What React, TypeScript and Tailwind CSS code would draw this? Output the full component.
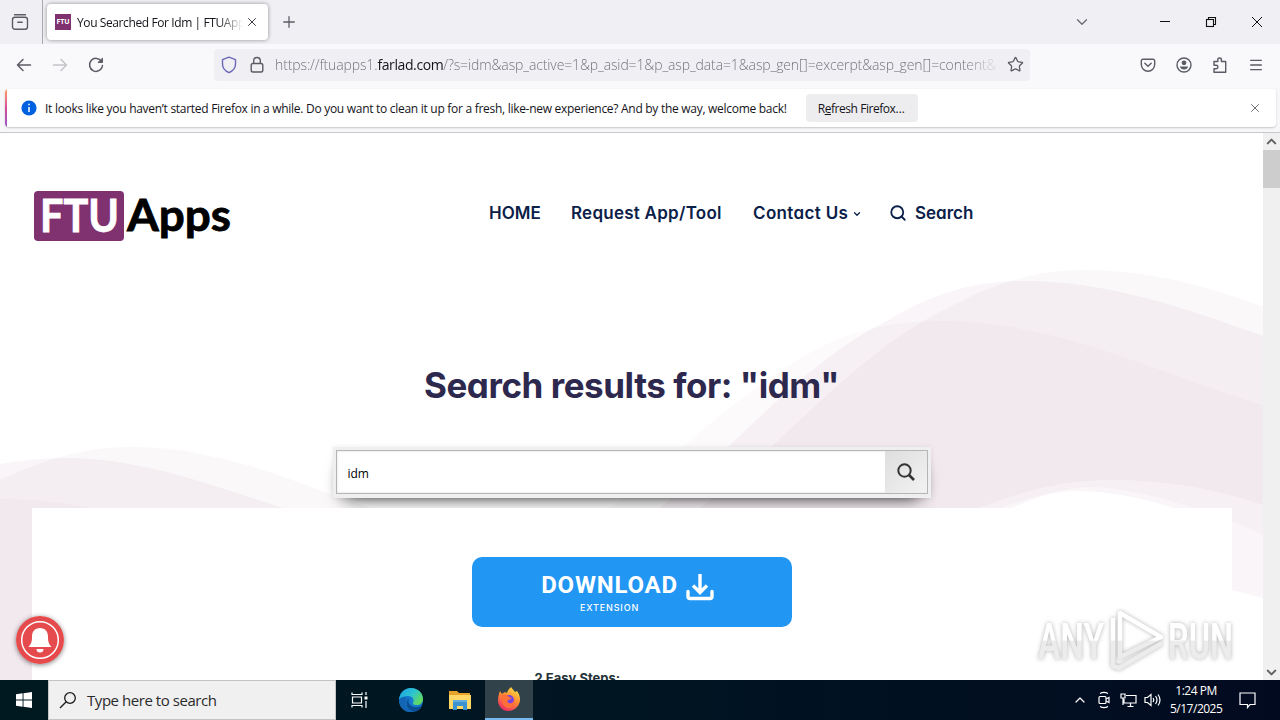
import React from 'react';
import { ChevronDown, ChevronUp, Menu, Plus, Search, Star, X } from 'lucide-react';

function TabBar() {
  return (
    <div className="flex h-11 shrink-0 items-center bg-[#f0f0f4]">
      <div className="flex h-11 w-[43px] items-center justify-center border-r border-[#a9a9b0] pr-[3px]">
        <svg width="18" height="18" viewBox="0 0 18 18" fill="none" stroke="#5b5b66" strokeWidth="1.4">
          <path d="M3.5 1.7h11" strokeLinecap="round" />
          <rect x="1.5" y="4.2" width="15" height="12" rx="2.5" />
          <path d="M6.8 9.2h4.4" strokeLinecap="round" />
        </svg>
      </div>
      <div className="ml-1 flex h-9 w-[221px] items-center rounded bg-white pl-2 shadow-[0_0_4px_rgba(0,0,0,0.4)]">
        <div className="flex size-4 items-center justify-center bg-[#80316f] text-[7px] font-bold text-white">FTU</div>
        <div className="ml-1.5 w-[166px] overflow-hidden whitespace-nowrap pt-0.5 text-[12px] tracking-[-0.4px] text-[#15141a] [mask-image:linear-gradient(to_right,black_85%,transparent)]">
          You Searched For Idm | FTUApps
        </div>
        <X className="ml-0.5 size-3.5 text-[#3a3a44]" strokeWidth={1.7} />
      </div>
      <Plus className="ml-3 size-[18px] text-[#5b5b66]" strokeWidth={1.7} />
      <div className="ml-auto flex items-center">
        <ChevronDown className="mr-[68px] size-[18px] text-[#6b6b76]" strokeWidth={1.8} />
        <svg width="12" height="12" viewBox="0 0 12 12" className="mr-[34px]">
          <path d="M1 5.5h10" stroke="#111" />
        </svg>
        <svg width="12" height="12" viewBox="0 0 12 12" className="mr-[34px]" fill="none" stroke="#111" strokeWidth="1.1">
          <rect x="1.5" y="3.5" width="7" height="7" />
          <path d="M3.5 3.5v-2h7v7h-2" />
        </svg>
        <svg width="12" height="12" viewBox="0 0 12 12" className="mr-[17px]">
          <path d="M1 1l10 10M11 1L1 11" stroke="#111" />
        </svg>
      </div>
    </div>
  );
}

function NavBar() {
  return (
    <div className="flex h-11 shrink-0 items-center bg-[#f9f9fb] pb-[3px] text-[#5b5b66]">
      <svg width="90" height="18" viewBox="0 0 90 18" fill="none" stroke="currentColor" strokeWidth="1.5" className="ml-[15px]" strokeLinecap="round" strokeLinejoin="round">
        <path d="M15.5 9H2.5M8 3.5L2.5 9l5.5 5.5" />
        <path d="M38.5 9h13M46 3.5l5.5 5.5l-5.5 5.5" stroke="#c3c3ca" />
        <path d="M86.6 5.5A6.5 6.5 0 1 0 87.5 9.5" />
        <path d="M87.5 2.5v4h-4.2z" fill="currentColor" strokeWidth="1" />
      </svg>
      <div className="ml-[109px] flex h-8 w-[816px] items-center rounded bg-[#f0f0f4] pl-[7px]">
        <svg width="16" height="18" viewBox="0 0 16 18" fill="none" stroke="#6c66b8" strokeWidth="1.4">
          <path d="M8 1.2L14.5 3.7V8c0 4-2.7 7-6.5 8.7C4.2 15 1.5 12 1.5 8V3.7z" strokeLinejoin="round" />
        </svg>
        <svg width="16" height="18" viewBox="0 0 16 18" fill="none" stroke="#5b5b66" strokeWidth="1.4" className="ml-3">
          <rect x="2.2" y="7.5" width="11.6" height="8.5" rx="1.8" />
          <path d="M4.7 7.5V4.8a3.3 3.3 0 0 1 6.6 0v2.700" />
        </svg>
        <div className="ml-[10px] w-[725px] overflow-hidden whitespace-nowrap text-[14px] font-light tracking-[-0.12px] text-[#74747e] [mask-image:linear-gradient(to_right,black_95%,transparent)]">
          https://ftuapps1.<span className="font-normal tracking-[-0.4px] text-[#15141a]">farlad.com</span>/?s=idm&amp;asp_active=1&amp;p_asid=1&amp;p_asp_data=1&amp;asp_gen[]=excerpt&amp;asp_gen[]=content&amp;
        </div>
        <Star className="ml-[7px] size-[17px] shrink-0 text-[#5b5b66]" strokeWidth={1.8} />
      </div>
      <div className="ml-auto flex items-center pr-4">
        <svg width="16" height="16" viewBox="0 0 16 16" fill="none" stroke="currentColor" strokeWidth="1.4" className="mr-5">
          <path d="M3 2.2h10a1.7 1.7 0 0 1 1.7 1.7V7.5a6.7 6.7 0 0 1-13.4 0V3.9A1.7 1.7 0 0 1 3 2.2z" />
          <path d="M4.8 6.2L8 9.2l3.2-3" strokeLinecap="round" />
        </svg>
        <svg width="16" height="16" viewBox="0 0 16 16" fill="none" stroke="currentColor" strokeWidth="1.4" className="mr-5">
          <circle cx="8" cy="8" r="7" />
          <circle cx="8" cy="5.8" r="2.4" fill="currentColor" stroke="none" />
          <path d="M4 9.6h8c0 2-2 3-4 3s-4-1-4-3z" fill="currentColor" stroke="none" />
        </svg>
        <svg width="16" height="16" viewBox="0 0 16 16" fill="none" stroke="currentColor" strokeWidth="1.4" className="mr-5">
          <path d="M2 4.5h3.8V2.8a1.8 1.8 0 0 1 3.6 0v1.7h4.3v10.7H2v-3.4h2.2a1.7 1.7 0 0 0 0-3.5H2z" strokeLinejoin="round" />
        </svg>
        <Menu className="size-4" strokeWidth={2} />
      </div>
    </div>
  );
}

function Notification() {
  return (
    <div className="h-[45px] shrink-0 border-b border-[#c8c8c8] bg-[#f7f7f9] pl-[5px] pr-1 pt-px">
      <div className="flex h-[38px] items-center overflow-hidden rounded bg-white shadow-[0_1px_2px_rgba(0,0,0,0.2)]">
        <div className="h-full w-0.5 bg-linear-to-b from-[#ff9f5a] via-[#d84a9a] to-[#9059c8]" />
        <svg width="16" height="16" viewBox="0 0 16 16" className="ml-[14px]">
          <circle cx="8" cy="8" r="7.6" fill="#0061e0" />
          <path d="M8 7v5M8 3.8v1.5" stroke="#fff" strokeWidth="1.5" />
        </svg>
        <div className="ml-2 w-[761px] whitespace-nowrap pt-0.5 text-[12px] tracking-[-0.285px] text-[#15141a]">
          It looks like you haven’t started Firefox in a while. Do you want to clean it up for a fresh, like-new experience? And by the way, welcome back!
        </div>
        <button className="h-7 w-28 rounded bg-[#ededf0] pr-0.5 pt-0.5 text-[12px] tracking-[-0.45px] text-[#15141a]">
          R<span className="underline">e</span>fresh Firefox…
        </button>
        <X className="ml-auto mr-[14px] size-[14px] text-[#5b5b66]" strokeWidth={1.5} />
      </div>
    </div>
  );
}

function Waves() {
  return (
    <svg className="absolute inset-0" width="1263" height="547" viewBox="0 133 1263 547" fill="#7c1b65">
      <g>
        <path d="M700 508C740 478 755 462 773 445C820 402 870 352 922 322C975 291 1025 270 1083 270C1150 270 1210 287 1263 307V505C1210 487 1160 480 1109 480C1060 480 1015 494 979 508z" fill="#7c3a55" fillOpacity="0.035" />
        <path d="M660 508C690 482 710 465 730 445C790 388 830 350 885 322C935 292 975 281 1024 281C1110 281 1190 310 1263 336V598L1232 590V530C1180 508 1130 491 1075 491C1050 491 1030 500 1011 508z" fillOpacity="0.042" />
        <path d="M610 508C640 487 662 464 685 445C740 398 775 372 815 350C860 327 900 321 942 321C1060 321 1160 375 1263 405V535C1210 510 1130 486 1090 487C1060 488 1030 498 1000 508z" fillOpacity="0.022" />
      </g>
      <g>
        <path d="M0 480C45 460 80 447 133 447C205 447 275 473 327 493L370 508V680H0z" fill="#7c3a55" fillOpacity="0.035" />
        <path d="M0 464C22 460 44 458 67 458C140 458 215 486 283 508V680H0z" fillOpacity="0.042" />
        <path d="M0 499C30 499 60 502 90 508V680H0z" fillOpacity="0.022" />
      </g>
    </svg>
  );
}

function SiteHeader() {
  return (
    <div className="flex h-[161px] items-center pl-8 font-['Inter'] text-[17px] font-semibold text-[#0a2048] [font-feature-settings:'cv11']">
      <svg width="202" height="56" viewBox="0 0 202 56" className="mt-[5px] overflow-visible font-['Lato'] font-bold">
        <rect x="2" y="3" width="90" height="50" rx="4" fill="#80316f" />
        <g strokeWidth="0.8">
          <text x="8" y="43.500" fontSize="45" textLength="79" lengthAdjust="spacingAndGlyphs" fill="#fff" stroke="#fff">FTU</text>
          <text x="95" y="42.500" fontSize="44" textLength="104" lengthAdjust="spacingAndGlyphs" fill="#000" stroke="#000">Apps</text>
        </g>
      </svg>
      <div className="ml-[255px] w-[82px] whitespace-nowrap">HOME</div>
      <div className="w-[182px] whitespace-nowrap tracking-[0.25px]">Request App/Tool</div>
      <div className="flex w-[136px] items-center whitespace-nowrap tracking-[0.35px]">
        Contact Us
        <ChevronDown className="ml-1 size-[10px]" strokeWidth={3} />
      </div>
      <Search className="mb-0.5 mr-2 size-[18px]" strokeWidth={2.4} />
      <div>Search</div>
    </div>
  );
}

function SearchBox() {
  return (
    <div className="mx-auto mt-[43px] h-[51px] w-[598px] bg-[#efefef] p-[3px] shadow-[0_10px_18px_-11px_rgba(0,0,0,0.95),0_0_5px_rgba(0,0,0,0.08)]">
      <div className="flex h-11 items-center border border-[#b5b5b5] bg-white shadow-[inset_0_0_3px_#ddd]">
        <div className="flex-1 pl-[11px] pt-[3px] text-[12px] text-black">idm</div>
        <div className="flex h-full w-[42px] items-center justify-center bg-linear-to-br from-[#dedede] to-[#f2f2f2]">
          <svg width="20" height="20" viewBox="0 0 20 20" fill="none" stroke="#333">
            <circle cx="8.500" cy="8.500" r="6.200" strokeWidth="2" />
            <path d="M13 13l5 5" strokeWidth="2.600" />
          </svg>
        </div>
      </div>
    </div>
  );
}

function Results() {
  return (
    <div className="relative mx-auto mt-[10px] h-[172px] w-[1200px] overflow-hidden bg-white pt-[49px] font-['Inter']">
      <div className="mx-auto flex h-[70px] w-80 items-start rounded-[10px] bg-[#2196f3] pl-[71px] text-white">
        <div className="flex w-[134px] flex-col items-center whitespace-nowrap">
          <div className="mt-3 font-['Roboto'] text-[24px] font-bold leading-8 tracking-[0.8px]">DOWNLOAD</div>
          <div className="mt-px text-[9px] font-medium leading-3 tracking-[0.85px]">EXTENSION</div>
        </div>
        <svg width="28" height="30" viewBox="0 0 28 30" fill="none" stroke="#fff" strokeWidth="3.400" className="ml-[9px] mt-4">
          <path d="M14 1v18M7 12.500l7 7 7-7" />
          <path d="M2 18.500v5a2 2 0 0 0 2 2h20a2 2 0 0 0 2-2v-5" strokeLinecap="round" />
        </svg>
      </div>
      <div className="ml-[503px] mt-[41px] text-[13px] font-bold leading-5 text-[#253238]">2 Easy Steps:</div>
    </div>
  );
}

function AlertBell() {
  return (
    <div className="absolute left-4 top-[483px] size-12 rounded-full shadow-[0_1px_5px_rgba(0,0,0,0.5)]">
      <svg width="48" height="48" viewBox="0 0 48 48">
        <circle cx="24" cy="24" r="24" fill="#e54b4d" />
        <circle cx="24" cy="24" r="18.300" fill="none" stroke="#fff" strokeWidth="1.500" />
        <path d="M24 12c-5 0-8 3.500-8 8.500 0 5-.5 7-3.500 10.500h23c-3-3.500-3.500-5.500-3.500-10.500 0-5-3-8.500-8-8.500z" fill="#fff" />
        <path d="M20.500 33h7a3.500 3.500 0 0 1-7 0z" fill="#fff" />
      </svg>
    </div>
  );
}

function Watermark() {
  return (
    <svg className="absolute left-[1034px] top-[473px] overflow-visible font-['Roboto'] drop-shadow-[0_0_2px_rgba(0,0,0,0.3)]" width="204" height="68" viewBox="0 0 204 68">
      <defs>
        <linearGradient id="mark" gradientUnits="userSpaceOnUse" x1="0" y1="0" x2="0" y2="68">
          <stop offset="0.500" stopColor="#fff" />
          <stop offset="0.520" stopColor="#ececec" />
        </linearGradient>
      </defs>
      <g fill="url(#mark)">
        <text x="4" y="53" fontSize="50" fontWeight="600" textLength="66" lengthAdjust="spacingAndGlyphs">ANY</text>
        <text x="134" y="53" fontSize="50" fontWeight="600" textLength="65" lengthAdjust="spacingAndGlyphs">RUN</text>
      </g>
      <g fill="none" stroke="url(#mark)" strokeWidth="4.500" strokeLinejoin="round">
        <path d="M81 7v44l41-20z" transform="translate(5 0)" />
        <path d="M79 12v48l6 2 43-25" />
      </g>
    </svg>
  );
}

function Scrollbar() {
  return (
    <div className="flex w-[17px] flex-col items-center bg-[#f0f0f0] text-[#606060]">
      <ChevronUp className="my-px size-[15px]" strokeWidth={3.2} />
      <div className="h-[38px] w-full bg-[#cdcdcd]" />
      <ChevronDown className="mt-auto size-[15px]" strokeWidth={3.2} />
    </div>
  );
}

function Taskbar() {
  return (
    <div className="flex h-10 shrink-0 items-center bg-linear-to-r from-[#001820] via-[#001522] to-[#020a20] text-white">
      <svg width="16" height="16" viewBox="0 0 16 16" fill="#fff" className="mx-4">
        <path d="M0 2.2L6.6 1.3V7.5H0zM7.5 1.2L16 0v7.5H7.5zM0 8.4h6.6v6.3L0 13.8zM7.5 8.4H16V16l-8.5-1.2z" />
      </svg>
      <div className="flex h-10 w-72 items-center border border-[#c4c4c4] bg-[#f0f0f0] text-[15px] tracking-[-0.45px] text-[#2b2b2b]">
        <svg width="18" height="18" viewBox="0 0 18 18" fill="none" stroke="#1a1a1a" strokeWidth="1.3" className="ml-2.5 mr-2.5">
          <circle cx="11" cy="7" r="5.3" />
          <path d="M7.2 10.8L1 17" />
        </svg>
        Type here to search
      </div>
      <svg width="18" height="16" viewBox="0 0 18 16" fill="none" stroke="#fff" strokeWidth="1.2" className="ml-[15px]">
        <path d="M1 .5v2h10v-2M1 15.5v-2h10v2M1.5 5h9v6h-9zM15 0v3M15 9v7" />
        <path d="M13.5 4.5h3v3h-3z" fill="#fff" stroke="none" />
      </svg>
      <svg width="26" height="26" viewBox="0 0 26 26" className="ml-[29px]">
        <defs>
          <linearGradient id="edgeTop" x1="0" y1="0" x2="1" y2="0.6">
            <stop offset="0" stopColor="#1ba0e2" />
            <stop offset="0.55" stopColor="#2bc3d2" />
            <stop offset="1" stopColor="#62d95e" />
          </linearGradient>
        </defs>
        <circle cx="13" cy="13" r="12" fill="#1479cf" />
        <path d="M1 13C2 5 7 1 13 1c7 0 12 5 12 11 0 4-3 6-6.5 6-3 0-4-1-3.5-2 2-4-1-7-5-7-4 0-7.5 1.5-9 4z" fill="url(#edgeTop)" />
        <path d="M9.5 11c-4 6 0 12 6.5 13.5C8 27 1 21 1 13c1.5-3 5-4 8.5-2z" fill="#1366b4" />
        <path d="M11 11c-2 5 2 10 9 9l4-1c-2 4-5 6-9 5.5C8 22 7 15 11 11z" fill="#0c4e93" />
      </svg>
      <svg width="24" height="22" viewBox="0 0 24 22" className="ml-6">
        <path d="M1 2h8l2 2h11v4H1z" fill="#e8a32b" />
        <path d="M1 6h22v14H1z" fill="#ffd767" />
        <path d="M5 11h14v10h-4v-4H9v4H5z" fill="#3c91d0" />
        <path d="M5 11h14v2H5z" fill="#63aee0" />
      </svg>
      <div className="ml-[13px] flex h-10 w-12 items-center justify-center border-b-2 border-[#76b9ed] bg-[#31424b]">
        <svg width="24" height="24" viewBox="0 0 24 24">
          <defs>
            <linearGradient id="fox" x1="0.8" y1="0" x2="0.3" y2="1">
              <stop offset="0" stopColor="#ffe44a" />
              <stop offset="0.45" stopColor="#ff9130" />
              <stop offset="1" stopColor="#f02b66" />
            </linearGradient>
          </defs>
          <path d="M14 0c1 2 3 3 4 5l2-1c3 4 4 9 2 13-2 4-6 7-10.5 7C5 24 1 19 1 13c0-4 1-6 2-9l2 3c2-2 4-2 5-1 1-3 2-4 4-6z" fill="url(#fox)" />
          <circle cx="12" cy="13" r="5" fill="#7542e5" />
          <path d="M5 8c3-1 6 0 7 2l3 1-3 2c-2 0-2 2 0 3 3 1 5-1 5-4 2 5-1 9-5 9-5 0-8-5-7-13z" fill="#ff7139" />
        </svg>
      </div>
      <div className="ml-auto flex items-center">
        <ChevronUp className="mr-2 size-4" strokeWidth={1.8} />
        <svg width="16" height="18" viewBox="0 0 16 18" fill="none" stroke="#fff" strokeWidth="1.2" className="mr-2">
          <rect x="3" y="5.5" width="7" height="7" rx="1" />
          <path d="M10 8l3-1.5v5L10 10M4 2.5c2.5-1.5 5.5-1.5 8 0M4 15.5c2.5 1.5 5.5 1.5 8 0" />
        </svg>
        <svg width="17" height="16" viewBox="0 0 17 16" fill="none" stroke="#fff" strokeWidth="1.2" className="mr-[7px]">
          <path d="M6 3.5h10v7.5H4V7M7.5 14.5h6M10.5 11v3.5M1 2h4v4H1zM3 6v7" />
        </svg>
        <svg width="17" height="16" viewBox="0 0 17 16" fill="none" stroke="#fff" strokeWidth="1.2" className="mr-[9px]">
          <path d="M1 5.5h2.5L7 2.5v11l-3.500-3H1zM9 6q1.5 2 0 4M11.5 4q3 4 0 8M14 2.5q4 5.5 0 11" />
        </svg>
        <div className="mr-[17px] w-[52px] whitespace-nowrap text-center text-[12px] leading-[18px] tracking-[-0.5px]">
          <div>1:24 PM</div>
          <div>5/17/2025</div>
        </div>
        <svg width="17" height="17" viewBox="0 0 17 17" fill="none" stroke="#fff" strokeWidth="1.2" className="mr-6">
          <path d="M1 1h15v11.5h-5L8.5 15.5V12.5H1z" />
        </svg>
      </div>
    </div>
  );
}

export default function App() {
  return (
    <div className="flex h-[720px] w-[1280px] flex-col overflow-hidden bg-white font-['Open_Sans',sans-serif]">
      <TabBar />
      <NavBar />
      <Notification />
      <div className="flex h-[547px] shrink-0">
        <div className="relative h-full w-[1263px] overflow-hidden">
          <Waves />
          <div className="relative">
            <SiteHeader />
            <h1 className="mt-[66px] text-center font-['Inter'] text-[35px] font-bold leading-[50px] tracking-[-0.45px] text-[#2d284d] [font-feature-settings:'cv11']">
              Search results for: "idm"
            </h1>
            <div className="-mt-[6px]">
              <SearchBox />
            </div>
            <Results />
          </div>
          <AlertBell />
          <Watermark />
        </div>
        <Scrollbar />
      </div>
      <Taskbar />
    </div>
  );
}
